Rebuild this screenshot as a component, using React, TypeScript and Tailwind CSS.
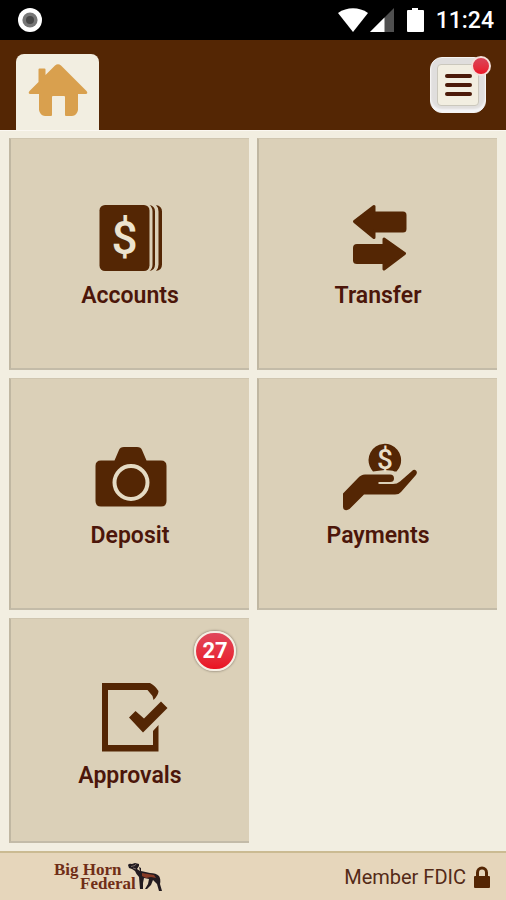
import type { ReactNode } from "react";

/* Status bar icons */
function StatusBar() {
  return (
    <div className="flex h-10 items-center justify-between bg-black pl-[18px] pr-3 text-white">
      <svg className="h-6 w-6" viewBox="0 0 24 24" aria-hidden="true">
        <circle cx="12" cy="12" r="12" fill="#fff" />
        <circle cx="12" cy="12" r="7.6" fill="#777" />
        <circle cx="12" cy="12" r="4" fill="#484848" />
      </svg>
      <div className="flex items-center">
        <svg className="h-6 w-[88px]" viewBox="0 0 88 24" aria-hidden="true">
          <path d="M0 5C9-1.2 21-1.2 30 5L15 24Z" fill="#fff" />
          <path d="M32 24 56 0v24Z" fill="#505050" />
          <path d="M32 24 46.500 9.500V24Z" fill="#fff" />
          <path d="M74 0h6v2h5q1 0 1 1v20q0 1-1 1H70q-1 0-1-1V3q0-1 1-1h4Z" fill="#fff" />
        </svg>
        <span className="ml-2.5 pt-0.5 text-[23px] font-medium">11:24</span>
      </div>
    </div>
  );
}

function HomeIcon() {
  return (
    <svg className="h-[52px] w-[60px]" viewBox="0 0 60 52" fill="#d9a04e" aria-hidden="true">
      <path d="M27 1.500q3-2.500 6 0L58.500 27q2 3-1 3H50v16q-1 5.500-6 6h-6q-1 0-1-1V33q0-1-1-1H25q-1 0-1 1v18q0 1-1 1h-6q-5-.5-6-6V30H2.500q-3 0-1-3L10.500 18V5.500q0-1 1-1h5q1 0 1 1V11Z" />
    </svg>
  );
}

function AccountsIcon() {
  return (
    <svg className="h-[72px] w-20" viewBox="0 0 80 72" aria-hidden="true">
      <rect x="9.500" y="3" width="50" height="66" rx="5.500" fill="#542604" />
      <path
        d="M59.500 3Q65 4 65 9.500v53Q65 68 59.500 69q3-2.500 3-6.500v-53q0-4-3-6.500ZM66 3q6 1 6 6.500v53q0 5.500-6 6.500 2.500-2.500 2.500-6.500v-53Q68.500 5.500 66 3Z"
        fill="#542604"
      />
      <text x="34.500" y="52" textAnchor="middle" fontSize="46" fontWeight="500" fill="#ece3cf">
        $
      </text>
    </svg>
  );
}

function TransferIcon() {
  return (
    <svg
      className="h-[72px] w-20"
      viewBox="0 0 80 72"
      fill="#542604"
      stroke="#542604"
      strokeWidth="3"
      strokeLinejoin="round"
      aria-hidden="true"
    >
      <path d="M16.500 19.500 36 4.500V11h29q2 0 2 2v14q0 2-2 2H36v6.500Z" />
      <path d="M66.500 51.500 46 67v-6.500H19q-2.500 0-2.500-2V46q0-2.500 2.500-2.500h27V37Z" />
    </svg>
  );
}

function DepositIcon() {
  return (
    <svg className="h-[72px] w-20" viewBox="0 0 80 72" aria-hidden="true">
      <path
        d="M11 18.500h13.500L29 8q1-3 5-3h13q4 0 5 3l4.500 10.500H71q5.500 0 5.500 5.500v35q0 5.500-5.500 5.500H11q-5.500 0-5.500-5.500V24q0-5.500 5.500-5.500Z"
        fill="#542604"
      />
      <circle cx="41" cy="40.500" r="16.500" fill="none" stroke="#e5dbc4" strokeWidth="4" />
    </svg>
  );
}

function PaymentsIcon() {
  return (
    <svg className="h-[72px] w-20" viewBox="0 0 80 72" aria-hidden="true">
      <path d="M35 29.500Q30.500 24 30.500 18a16.300 16.300 0 1 1 28 11.500h-2q-3-1.500-10-1.500Z" fill="#542604" />
      <text x="47" y="27" textAnchor="middle" fontSize="28" fontWeight="500" fill="#e8dec8">
        $
      </text>
      <path
        d="M5 51.500 20 36q3-3.500 7-3.500h25q4 0 4 4 0 3.500-4 3.500H40.500v2H55q4 0 7-2.500L74 29q2-2 4-.5 2 2-.5 5L63 50q-2 2.500-6 2.500H26L11.500 67q-2 1.500-4.500 1-2-.5-2-3Z"
        fill="#542604"
      />
    </svg>
  );
}

function ApprovalsIcon() {
  return (
    <svg className="h-[72px] w-20" viewBox="0 0 80 72" aria-hidden="true">
      <path
        d="M12 1h48q5 2.500 8.500 8 0 4-5 9l-1-4-5-6H18v55h45V49l5.500-6v26.500H12Z"
        fill="#542604"
      />
      <path d="m39 35.500 6.500-6.500 8.500 7.500L71 19.500l6.500 6.500L53 50.500Z" fill="#542604" />
    </svg>
  );
}

function MooseLogo() {
  return (
    <svg className="h-[30px] w-[34px]" viewBox="0 0 34 30" aria-hidden="true">
      <path
        d="M0 3q1-2 4-1l3-1 4 1v2l-2 3 3 2-1-4 2 1v3l9 2q6 0 9 3 2 3 1 8l2 7h-3l-2-7-4-4-2 5-4 4h-2l3-5 1-5-5-1-1 5v6h-3l-1-12q-3-3-4-6L4 7 1 6Z"
        fill="#221b20"
      />
      <path d="m14 11 6 1 6 1 2 3-5-1-5 1-4-2Z" fill="#873b26" />
      <path d="m3 4.500 4-1 1-1.500M5 6l3 1" fill="none" stroke="#8f8078" strokeWidth=".8" />
    </svg>
  );
}

type TileProps = {
  label: string;
  icon: ReactNode;
  badge?: number;
};

function Tile({ label, icon, badge }: TileProps) {
  return (
    <button
      type="button"
      className="relative flex flex-col items-center border-b-2 border-l-2 border-t border-b-[#c3bba8] border-l-[#c0b7a2] border-t-[#d0c6b0] bg-[#dbd0b8] pt-[63px] text-[#4c160a]"
    >
      {icon}
      <span className="mt-1.5 text-[23px] font-semibold leading-8">{label}</span>
      {badge !== undefined && (
        <span className="absolute right-[13px] top-3 flex h-10 w-[42px] items-center justify-center rounded-full border-2 border-[#f5eee4] bg-linear-to-b from-[#e0455a] to-[#ea1020] text-[22px] font-bold leading-none text-white shadow-[0_0_2px_1px_#a99f8d]">
          {badge}
        </span>
      )}
    </button>
  );
}

const TILES: TileProps[] = [
  { label: "Accounts", icon: <AccountsIcon /> },
  { label: "Transfer", icon: <TransferIcon /> },
  { label: "Deposit", icon: <DepositIcon /> },
  { label: "Payments", icon: <PaymentsIcon /> },
  { label: "Approvals", icon: <ApprovalsIcon />, badge: 27 },
];

export default function App() {
  return (
    <div className="flex min-h-screen flex-col bg-[#f2eee1] font-['Roboto',sans-serif]">
      <StatusBar />

      <header className="flex h-[90px] items-end justify-between bg-[#542604] pl-4 pr-5">
        <a
          href="#home"
          aria-label="Home"
          className="flex h-[76px] w-[83px] justify-center rounded-t-lg bg-[#f2eee1] pt-[10px]"
        >
          <HomeIcon />
        </a>
        <button
          type="button"
          aria-label="Menu"
          className="relative mb-[17px] flex h-14 w-14 items-center justify-center rounded-xl border border-[#f6f4f3] bg-[#e0dedd] shadow-[inset_0_-3px_2px_#f5f5f7]"
        >
          <span className="flex h-[42px] w-[42px] flex-col items-center justify-center gap-[5px] rounded border border-[#cbc8bd] bg-[#f2eee1]">
            <span className="h-1 w-[27px] rounded-full bg-[#4c1a09]" />
            <span className="h-1 w-[27px] rounded-full bg-[#4c1a09]" />
            <span className="h-1 w-[27px] rounded-full bg-[#4c1a09]" />
          </span>
          <span className="absolute -right-[6px] -top-[2px] h-5 w-5 rounded-full border-2 border-[#f4dfda] bg-linear-to-b from-[#d94358] to-[#ec1226]" />
        </button>
      </header>

      <main className="grid flex-1 grid-cols-2 grid-rows-[232fr_232fr_225fr] gap-2 border-t border-[#fbf8f2] px-[9px] pb-2 pt-[7px]">
        {TILES.map((t) => (
          <Tile key={t.label} {...t} />
        ))}
      </main>

      <footer className="flex h-[49px] items-center justify-between border-t-2 border-[#cbbb92] bg-[#e6d6bb] pl-[54px] pr-4">
        <div className="flex items-center">
          <div className="flex flex-col font-['Liberation_Serif',serif] text-[17px] font-bold leading-[14px] text-[#702e17]">
            <span>Big Horn</span>
            <span className="pl-[26px]">Federal</span>
          </div>
          <div className="-ml-2">
            <MooseLogo />
          </div>
        </div>
        <div className="flex items-center gap-2 text-[#542a17]">
          <span className="text-xl">Member FDIC</span>
          <svg className="h-[22px] w-4" viewBox="0 0 16 22" aria-hidden="true">
            <path d="M3.500 11V6.500a4.500 4.500 0 0 1 9 0V11" fill="none" stroke="#542604" strokeWidth="3" />
            <rect y="10" width="16" height="12" rx="1" fill="#542604" />
          </svg>
        </div>
      </footer>
    </div>
  );
}
